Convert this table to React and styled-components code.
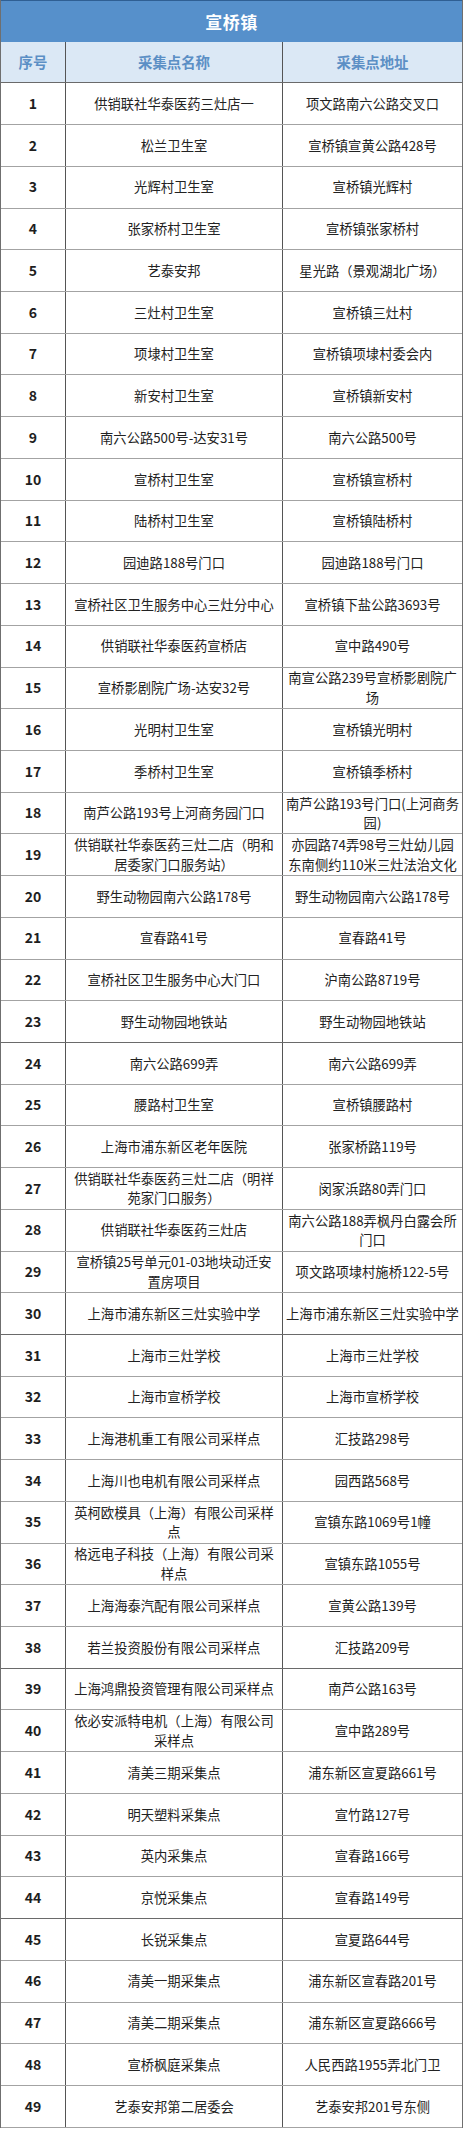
import React from "react";
import styled, { createGlobalStyle } from "styled-components";

const GlobalStyle = createGlobalStyle`
  html, body {
    margin: 0;
    padding: 0;
    background: #ffffff;
  }
  body {
    font-family: "Noto Sans CJK SC", "Microsoft YaHei", sans-serif;
  }
`;

const ROW_H = "41.73px";

const Sheet = styled.div`
  width: 463px;
  background: #ffffff;
  color: #222222;
  border-left: 1px solid #6f6f6f;
  border-right: 1px solid #6f6f6f;
  box-sizing: border-box;
`;

const TitleBar = styled.div`
  height: ${ROW_H};
  box-sizing: border-box;
  background: #5690cb;
  border-top: 1px solid #2f5f93;
  display: flex;
  align-items: center;
  justify-content: center;
  color: #ffffff;
  font-size: 17px;
  font-weight: 700;
  letter-spacing: 0.5px;
`;

const Row = styled.div`
  display: grid;
  grid-template-columns: 64px 217px 1fr;
  height: ${ROW_H};
  box-sizing: border-box;
  border-bottom: 1px solid ${(p) => (p.$dark ? "#6a6a6a" : "#a3a3a3")};
  background: ${(p) => (p.$head ? "#dbe8f5" : "#ffffff")};
`;

const Cell = styled.div`
  display: flex;
  align-items: center;
  justify-content: center;
  text-align: center;
  padding: 0 3px;
  overflow: hidden;
  white-space: pre;
  box-sizing: border-box;
  font-size: 13.3px;
  line-height: 19.5px;
  & + & {
    border-left: 1px solid #555555;
  }
`;

const HeadCell = styled(Cell)`
  color: #5b8fc5;
  font-size: 14.4px;
  font-weight: 700;
`;

const NumCell = styled(Cell)`
  font-size: 14px;
  font-weight: 700;
  color: #1e1e1e;
`;

const rows = [
  ["供销联社华泰医药三灶店一", "项文路南六公路交叉口"],
  ["松兰卫生室", "宣桥镇宣黄公路428号"],
  ["光辉村卫生室", "宣桥镇光辉村"],
  ["张家桥村卫生室", "宣桥镇张家桥村"],
  ["艺泰安邦", "星光路（景观湖北广场）"],
  ["三灶村卫生室", "宣桥镇三灶村"],
  ["项埭村卫生室", "宣桥镇项埭村委会内"],
  ["新安村卫生室", "宣桥镇新安村"],
  ["南六公路500号-达安31号", "南六公路500号"],
  ["宣桥村卫生室", "宣桥镇宣桥村"],
  ["陆桥村卫生室", "宣桥镇陆桥村"],
  ["园迪路188号门口", "园迪路188号门口"],
  ["宣桥社区卫生服务中心三灶分中心", "宣桥镇下盐公路3693号"],
  ["供销联社华泰医药宣桥店", "宣中路490号"],
  ["宣桥影剧院广场-达安32号", "南宣公路239号宣桥影剧院广\n场"],
  ["光明村卫生室", "宣桥镇光明村"],
  ["季桥村卫生室", "宣桥镇季桥村"],
  ["南芦公路193号上河商务园门口", "南芦公路193号门口(上河商务\n园)"],
  [
    "供销联社华泰医药三灶二店（明和\n居委家门口服务站）",
    "亦园路74弄98号三灶幼儿园\n东南侧约110米三灶法治文化",
  ],
  ["野生动物园南六公路178号", "野生动物园南六公路178号"],
  ["宣春路41号", "宣春路41号"],
  ["宣桥社区卫生服务中心大门口", "沪南公路8719号"],
  ["野生动物园地铁站", "野生动物园地铁站"],
  ["南六公路699弄", "南六公路699弄"],
  ["腰路村卫生室", "宣桥镇腰路村"],
  ["上海市浦东新区老年医院", "张家桥路119号"],
  ["供销联社华泰医药三灶二店（明祥\n苑家门口服务）", "闵家浜路80弄门口"],
  ["供销联社华泰医药三灶店", "南六公路188弄枫丹白露会所\n门口"],
  ["宣桥镇25号单元01-03地块动迁安\n置房项目", "项文路项埭村施桥122-5号"],
  ["上海市浦东新区三灶实验中学", "上海市浦东新区三灶实验中学"],
  ["上海市三灶学校", "上海市三灶学校"],
  ["上海市宣桥学校", "上海市宣桥学校"],
  ["上海港机重工有限公司采样点", "汇技路298号"],
  ["上海川也电机有限公司采样点", "园西路568号"],
  ["英柯欧模具（上海）有限公司采样\n点", "宣镇东路1069号1幢"],
  ["格远电子科技（上海）有限公司采\n样点", "宣镇东路1055号"],
  ["上海海泰汽配有限公司采样点", "宣黄公路139号"],
  ["若兰投资股份有限公司采样点", "汇技路209号"],
  ["上海鸿鼎投资管理有限公司采样点", "南芦公路163号"],
  ["依必安派特电机（上海）有限公司\n采样点", "宣中路289号"],
  ["清美三期采集点", "浦东新区宣夏路661号"],
  ["明天塑料采集点", "宣竹路127号"],
  ["英内采集点", "宣春路166号"],
  ["京悦采集点", "宣春路149号"],
  ["长锐采集点", "宣夏路644号"],
  ["清美一期采集点", "浦东新区宣春路201号"],
  ["清美二期采集点", "浦东新区宣夏路666号"],
  ["宣桥枫庭采集点", "人民西路1955弄北门卫"],
  ["艺泰安邦第二居委会", "艺泰安邦201号东侧"],
];

// rows whose bottom line looks heavier in the scan
const darkLines = [23, 30, 38, 44];

export default function App() {
  return (
    <>
      <GlobalStyle />
      <Sheet>
        <TitleBar>宣桥镇</TitleBar>
        <Row $head $dark>
          <HeadCell>序号</HeadCell>
          <HeadCell>采集点名称</HeadCell>
          <HeadCell>采集点地址</HeadCell>
        </Row>
        {rows.map(([name, addr], i) => (
          <Row key={i} $dark={darkLines.includes(i + 1)}>
            <NumCell>{i + 1}</NumCell>
            <Cell>{name}</Cell>
            <Cell>{addr}</Cell>
          </Row>
        ))}
      </Sheet>
    </>
  );
}
